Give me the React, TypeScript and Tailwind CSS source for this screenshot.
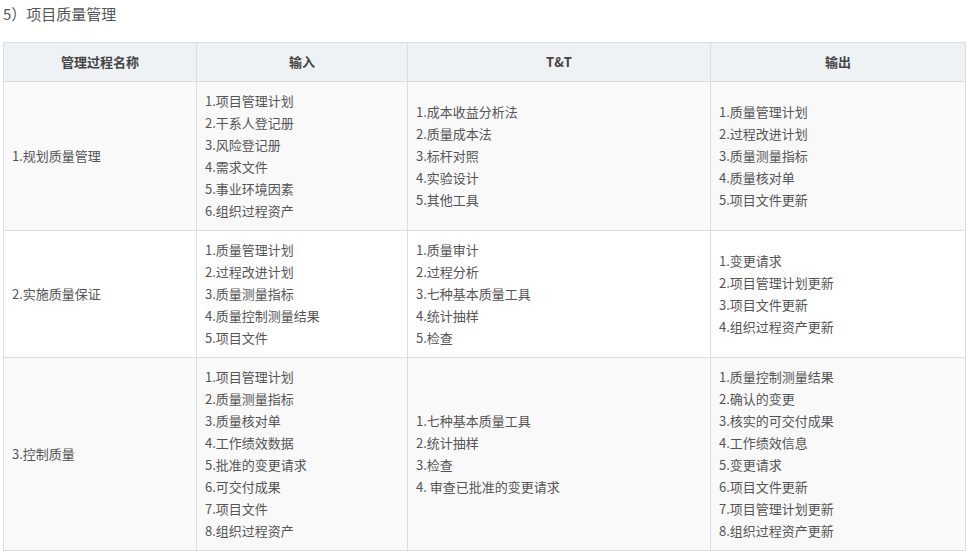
const rows = [
  {
    name: "1.规划质量管理",
    input: ["1.项目管理计划", "2.干系人登记册", "3.风险登记册", "4.需求文件", "5.事业环境因素", "6.组织过程资产"],
    tt: ["1.成本收益分析法", "2.质量成本法", "3.标杆对照", "4.实验设计", "5.其他工具"],
    output: ["1.质量管理计划", "2.过程改进计划", "3.质量测量指标", "4.质量核对单", "5.项目文件更新"],
    bg: "bg-[#f9f9f9]",
  },
  {
    name: "2.实施质量保证",
    input: ["1.质量管理计划", "2.过程改进计划", "3.质量测量指标", "4.质量控制测量结果", "5.项目文件"],
    tt: ["1.质量审计", "2.过程分析", "3.七种基本质量工具", "4.统计抽样", "5.检查"],
    output: ["1.变更请求", "2.项目管理计划更新", "3.项目文件更新", "4.组织过程资产更新"],
    bg: "bg-white",
  },
  {
    name: "3.控制质量",
    input: ["1.项目管理计划", "2.质量测量指标", "3.质量核对单", "4.工作绩效数据", "5.批准的变更请求", "6.可交付成果", "7.项目文件", "8.组织过程资产"],
    tt: ["1.七种基本质量工具", "2.统计抽样", "3.检查", "4. 审查已批准的变更请求"],
    output: ["1.质量控制测量结果", "2.确认的变更", "3.核实的可交付成果", "4.工作绩效信息", "5.变更请求", "6.项目文件更新", "7.项目管理计划更新", "8.组织过程资产更新"],
    bg: "bg-[#f9f9f9]",
  },
];

const List = ({ items }: { items: string[] }) => (
  <div>
    {items.map((t) => (
      <div key={t} className="whitespace-nowrap">{t}</div>
    ))}
  </div>
);

const App = () => {
  return (
    <div className="px-[3px] pt-[3px] text-[13px] leading-[22px] text-[#555]" style={{ fontFamily: '"Noto Sans CJK SC", "Noto Sans", sans-serif' }}>
      <div className="text-[15px] leading-[22px] text-[#555]">5）项目质量管理</div>
      <table className="mt-[17px] w-[962px] table-fixed border-collapse">
        <colgroup>
          <col className="w-[193px]" />
          <col className="w-[211px]" />
          <col className="w-[303px]" />
          <col className="w-[255px]" />
        </colgroup>
        <thead>
          <tr className="bg-[#eef2f5]">
            {["管理过程名称", "输入", "T&T", "输出"].map((h) => (
              <th key={h} className="border border-[#dddddd] px-2 py-2 text-center font-bold text-[#444]">
                {h}
              </th>
            ))}
          </tr>
        </thead>
        <tbody>
          {rows.map((r) => (
            <tr key={r.name} className={r.bg}>
              <td className="border border-[#dddddd] px-2 py-2 align-middle">{r.name}</td>
              <td className="border border-[#dddddd] px-2 py-2 align-middle"><List items={r.input} /></td>
              <td className="border border-[#dddddd] px-2 py-2 align-middle"><List items={r.tt} /></td>
              <td className="border border-[#dddddd] px-2 py-2 align-middle"><List items={r.output} /></td>
            </tr>
          ))}
        </tbody>
      </table>
    </div>
  );
};

export default App;
